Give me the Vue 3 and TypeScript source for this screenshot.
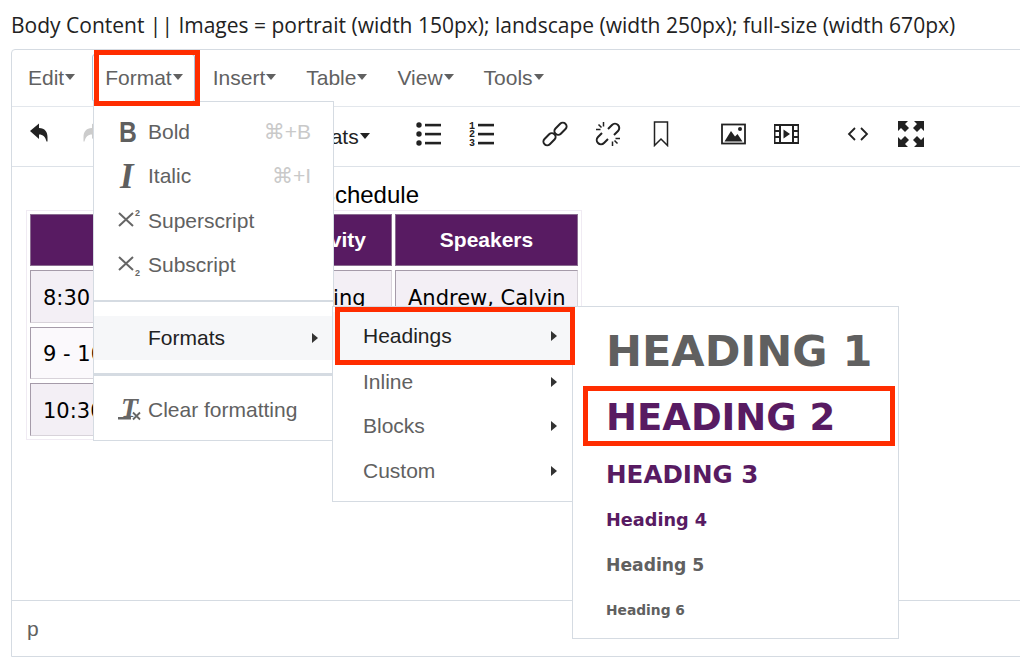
<script setup lang="ts">
const menus = ['Edit', 'Format', 'Insert', 'Table', 'View', 'Tools']

const formatItems = [
  { label: 'Bold', icon: 'bold', keys: '⌘+B' },
  { label: 'Italic', icon: 'italic', keys: '⌘+I' },
  { label: 'Superscript', icon: 'sup', keys: '' },
  { label: 'Subscript', icon: 'sub', keys: '' },
]

const formatsItems = ['Headings', 'Inline', 'Blocks', 'Custom']

const headings = [
  { label: 'HEADING 1', cls: 'h1' },
  { label: 'HEADING 2', cls: 'h2' },
  { label: 'HEADING 3', cls: 'h3' },
  { label: 'Heading 4', cls: 'h4' },
  { label: 'Heading 5', cls: 'h5' },
  { label: 'Heading 6', cls: 'h6' },
]

const rows = [
  { time: '8:30 - 9 am', activity: 'Opening', speakers: 'Andrew, Calvin' },
  { time: '9 - 10:30 am', activity: 'Keynote', speakers: 'Andrew' },
  { time: '10:30 - 11 am', activity: 'Break', speakers: 'Calvin' },
]
</script>

<template>
  <div class="page">
    <p class="label">Body Content || Images = portrait (width 150px); landscape (width 250px); full-size (width 670px)</p>

    <div class="editor">
      <div class="menubar">
        <button v-for="m in menus" :key="m" class="menu-btn" :class="{ active: m === 'Format' }">
          {{ m }}<i class="caret"></i>
        </button>
      </div>

      <div class="toolbar">
        <div class="group">
          <span class="tool">
            <svg width="20" height="24" viewBox="0 0 20 24"><path d="M1 9L10 1.500V6C16 6 18.500 10 18.500 15V19.500H17.500C16.500 15 14 12.500 10 12.500V17Z" fill="#222" /></svg>
          </span>
          <span class="tool">
            <svg width="20" height="24" viewBox="0 0 20 24"><path d="M19 9L10 1.500V6C4 6 1.500 10 1.500 15V19.500H2.500C3.500 15 6 12.500 10 12.500V17Z" fill="#ccc" /></svg>
          </span>
        </div>
        <div class="group formats-btn">Formats<i class="caret dark"></i></div>
        <div class="group">
          <span class="tool">
            <svg width="26" height="26" viewBox="0 0 26 26" fill="#222">
              <circle cx="3" cy="4" r="2.700" /><circle cx="3" cy="13" r="2.700" /><circle cx="3" cy="22" r="2.700" />
              <rect x="9" y="2.800" width="16" height="2.600" /><rect x="9" y="11.800" width="16" height="2.600" /><rect x="9" y="20.800" width="16" height="2.600" />
            </svg>
          </span>
          <span class="tool">
            <svg width="26" height="26" viewBox="0 0 26 26" fill="#222">
              <text x="0" y="7.500" class="num">1</text><text x="0" y="16" class="num">2</text><text x="0" y="24.500" class="num">3</text>
              <rect x="9" y="2.800" width="16" height="2.600" /><rect x="9" y="11.800" width="16" height="2.600" /><rect x="9" y="20.800" width="16" height="2.600" />
            </svg>
          </span>
        </div>
        <div class="group">
          <span class="tool">
            <svg width="26" height="26" viewBox="0 0 26 26" fill="none" stroke="#222" stroke-width="2">
              <rect x="11.500" y="4" width="14" height="7.500" rx="3.700" transform="rotate(-45 18.500 7.750)" />
              <rect x="0.500" y="14.500" width="14" height="7.500" rx="3.700" transform="rotate(-45 7.500 18.250)" />
            </svg>
          </span>
          <span class="tool">
            <svg width="28" height="28" viewBox="0 0 28 28" fill="none" stroke="#222" stroke-width="2">
              <path d="M14 9L18 5A4.200 4.200 0 0 1 24 11L20 15" />
              <path d="M14 19L10 23A4.200 4.200 0 0 1 4 17L8 13" />
              <path d="M9.500 2V6.500M2 9.500H6.500M4.500 4.500L7.500 7.500M18.500 26V21.500M26 18.500H21.500M23.500 23.500L20.500 20.500" stroke-width="1.500" />
            </svg>
          </span>
          <span class="tool">
            <svg width="16" height="26" viewBox="0 0 16 26" fill="none" stroke="#222" stroke-width="1.500"><path d="M1.500 1V24.500L8 18L14.500 24.500V1Z" /></svg>
          </span>
        </div>
        <div class="group">
          <span class="tool">
            <svg width="25" height="22" viewBox="0 0 25 22">
              <rect x="1" y="1.500" width="23" height="19" fill="none" stroke="#222" stroke-width="1.800" />
              <path d="M3.500 18.500L10 8L14 13.500L16.500 11L21.500 18.500Z" fill="#222" /><circle cx="19" cy="6" r="2" fill="#222" />
            </svg>
          </span>
          <span class="tool">
            <svg width="25" height="20" viewBox="0 0 25 20" fill="#222">
              <path fill-rule="evenodd" d="M0 0H25V20H0ZM1.500 2V6H5V2ZM1.500 8V12H5V8ZM1.500 14V18H5V14ZM20 2V6H23.500V2ZM20 8V12H23.500V8ZM20 14V18H23.500V14ZM7 2V18H18V2Z" />
              <path d="M9.500 5.500L16 10L9.500 14.500Z" />
            </svg>
          </span>
        </div>
        <div class="group">
          <span class="tool">
            <svg width="22" height="16" viewBox="0 0 22 16" fill="none" stroke="#222" stroke-width="1.800"><path d="M8 2L2 8L8 14M14 2L20 8L14 14" /></svg>
          </span>
          <span class="tool">
            <svg width="26" height="26" viewBox="0 0 26 26" fill="#222">
              <path d="M0 0H10L7 3L11 7L7 11L3 7L0 10ZM26 0V10L23 7L19 11L15 7L19 3L16 0ZM0 26V16L3 19L7 15L11 19L7 23L10 26ZM26 26H16L19 23L15 19L19 15L23 19L26 16Z" />
            </svg>
          </span>
        </div>
      </div>

      <div class="content">
        <p class="intro">Conference Schedule</p>
        <div class="table-wrap">
          <table>
            <thead>
              <tr><th class="c1">Time</th><th class="c2">Activity</th><th class="c3">Speakers</th></tr>
            </thead>
            <tbody>
              <tr v-for="(r, i) in rows" :key="r.time" :class="{ odd: i % 2 === 1 }">
                <td>{{ r.time }}</td><td>{{ r.activity }}</td><td>{{ r.speakers }}</td>
              </tr>
            </tbody>
          </table>
        </div>
      </div>

      <div class="statusbar">p</div>
    </div>

    <!-- open dropdowns -->
    <div class="dropdown format-menu">
      <div v-for="it in formatItems" :key="it.label" class="item">
        <span class="ico">
          <span v-if="it.icon === 'bold'" class="ico-b">B</span>
          <span v-else-if="it.icon === 'italic'" class="ico-i">I</span>
          <svg v-else-if="it.icon === 'sup'" width="24" height="24" viewBox="0 0 24 24">
            <path d="M1 4L15 17M15 4L1 17" stroke="#666" stroke-width="2" fill="none" />
            <text x="17" y="7" class="tiny">2</text>
          </svg>
          <svg v-else width="24" height="24" viewBox="0 0 24 24">
            <path d="M1 4L15 17M15 4L1 17" stroke="#666" stroke-width="2" fill="none" />
            <text x="17" y="23" class="tiny">2</text>
          </svg>
        </span>
        <span class="item-label">{{ it.label }}</span>
        <span class="keys">{{ it.keys }}</span>
      </div>
      <div class="sep sep-a"></div>
      <div class="item hover">
        <span class="ico"></span>
        <span class="item-label">Formats</span>
        <i class="arrow"></i>
      </div>
      <div class="sep sep-b"></div>
      <div class="item">
        <span class="ico">
          <svg class="clear-ico" width="26" height="26" viewBox="0 0 26 26">
            <text x="3" y="20" class="tx">T</text>
            <rect x="0" y="20" width="13" height="2.500" fill="#666" />
            <path d="M15 15.500L22 22.500M22 15.500L15 22.500" stroke="#666" stroke-width="1.800" fill="none" />
          </svg>
        </span>
        <span class="item-label">Clear formatting</span>
      </div>
    </div>

    <div class="dropdown formats-menu">
      <div v-for="(f, i) in formatsItems" :key="f" class="item" :class="{ hover: i === 0 }">
        <span class="item-label">{{ f }}</span>
        <i class="arrow"></i>
      </div>
    </div>

    <div class="dropdown headings-menu">
      <div v-for="h in headings" :key="h.cls" class="heading" :class="h.cls">{{ h.label }}</div>
    </div>

    <!-- red annotation boxes -->
    <div class="mark mark-format"></div>
    <div class="mark mark-headings"></div>
    <div class="mark mark-h2"></div>
  </div>
</template>

<style scoped>
.page {
  position: relative;
  width: 1020px;
  height: 663px;
  overflow: hidden;
  font-family: "Liberation Sans", Arial, sans-serif;
  color: #000;
  background: #fff;
}
.label {
  margin: 0;
  height: 49px;
  padding: 11px 0 0 11px;
  box-sizing: border-box;
  font-family: "Open Sans", sans-serif;
  font-size: 21px;
  line-height: 28px;
  color: #222;
  white-space: nowrap;
}
.editor {
  margin-left: 11px;
  width: 1040px;
  height: 608px;
  box-sizing: border-box;
  border: 1px solid #d5dbe2;
  border-radius: 4px 0 0 0;
  display: flex;
  flex-direction: column;
}
.menubar {
  height: 56px;
  flex: none;
  display: flex;
  align-items: center;
  gap: 30px;
  padding-left: 16px;
  border-bottom: 1px solid #e3e7ec;
}
.menu-btn {
  font: inherit;
  font-size: 21px;
  color: #616161;
  background: none;
  border: 0;
  padding: 0;
  display: flex;
  align-items: center;
}
.menu-btn.active {
  position: relative;
}
.menu-btn.active::before {
  content: "";
  position: absolute;
  inset: -12px -12px -12px -13px;
  border: 1px solid #a9c3dd;
  border-radius: 3px;
}
.caret {
  display: inline-block;
  margin-left: 1px;
  margin-top: -2px;
  border-top: 6px solid #616161;
  border-left: 5.500px solid transparent;
  border-right: 5.500px solid transparent;
}
.caret.dark {
  border-top-color: #222;
}
.toolbar {
  height: 59px;
  flex: none;
  display: flex;
  align-items: center;
  border-bottom: 1px solid #dde2e8;
}
.group {
  display: flex;
  align-items: center;
  margin-right: 19.300px;
}
.tool {
  width: 53px;
  height: 40px;
  margin-top: -6px;
  display: flex;
  align-items: center;
  justify-content: center;
}
.num {
  font: bold 10px "Liberation Mono", monospace;
}
.formats-btn {
  width: 246.400px;
  justify-content: flex-end;
  padding-right: 14px;
  box-sizing: border-box;
  font-size: 21px;
  color: #222;
}
.content {
  flex: 1;
  padding: 14px 0 0 14px;
}
.intro {
  margin: 0;
  width: 393px;
  height: 28px;
  text-align: right;
  font-size: 24px;
  line-height: 28px;
  color: #000;
  white-space: nowrap;
}
.table-wrap {
  margin-top: 1px;
  width: 556px;
  box-sizing: border-box;
  border: 1px solid #f0ebf3;
}
table {
  border-collapse: separate;
  border-spacing: 3px 4px;
  width: 100%;
  table-layout: fixed;
  margin: -1px 0;
}
th {
  height: 52px;
  padding: 0;
  background: #581b62;
  color: #fff;
  font-size: 21px;
  font-weight: bold;
  border: 1px solid #8a6c90;
  box-sizing: border-box;
}
.c1 {
  width: 231px;
}
.c2 {
  width: 128px;
}
td {
  height: 52.500px;
  box-sizing: border-box;
  padding: 3px 0 0 12px;
  background: #f3eff5;
  font-family: "DejaVu Sans", sans-serif;
  font-size: 21px;
  color: #000;
  white-space: nowrap;
  overflow: hidden;
  border: 1px solid #d8d3da;
  border-top-color: #a59ba9;
  border-left-color: #a59ba9;
}
tr.odd td {
  background: #fbf9fc;
}
.statusbar {
  height: 55px;
  flex: none;
  border-top: 1px solid #d5dbe2;
  border-bottom: 1px solid #d5dbe2;
  margin-bottom: -1px;
  padding-left: 15px;
  font-size: 21px;
  line-height: 56px;
  color: #616161;
}
.dropdown {
  position: absolute;
  box-sizing: border-box;
  background: #fff;
  border: 1px solid #d5dbe2;
  font-size: 21px;
  color: #616161;
}
.format-menu {
  left: 93px;
  top: 101px;
  width: 241px;
  height: 340px;
  padding: 8px 0;
}
.item {
  height: 44.250px;
  display: flex;
  align-items: center;
  position: relative;
}
.item.hover {
  background: #f6f7f9;
  color: #222;
}
.ico {
  width: 54px;
  flex: none;
  padding-left: 24px;
  box-sizing: border-box;
  display: flex;
  align-items: center;
  justify-content: flex-start;
}
.ico-b {
  font: bold 29px/1 "Liberation Sans", sans-serif;
  color: #5f5f5f;
  margin-left: 1px;
  transform: scaleX(0.85);
  transform-origin: left center;
}
.ico-i {
  font: italic bold 35px/1 "Liberation Serif", serif;
  color: #5f5f5f;
  margin-left: 2px;
}
.clear-ico {
  overflow: visible;
}
.tiny {
  font: bold 9px "Liberation Sans", sans-serif;
  fill: #666;
}
.tx {
  font: italic bold 28px "Liberation Serif", serif;
  fill: #666;
}
.keys {
  position: absolute;
  right: 22px;
  color: #c9c9c9;
  font-family: "Liberation Sans", "DejaVu Sans", sans-serif;
  font-size: 21px;
}
.arrow {
  position: absolute;
  right: 15px;
  border-left: 6px solid #333;
  border-top: 5.500px solid transparent;
  border-bottom: 5.500px solid transparent;
}
.sep {
  background: #d5dbe2;
}
.sep-a {
  height: 2px;
  margin: 13px 0 14px;
}
.sep-b {
  height: 3px;
  margin: 13px 0 12px;
}
.formats-menu {
  left: 332px;
  top: 306px;
  width: 241px;
  height: 196px;
  padding: 5px 0 0;
}
.formats-menu .item {
  padding-left: 30px;
}
.formats-menu .item:first-child {
  height: 48px;
}
.headings-menu {
  left: 572px;
  top: 306px;
  width: 327px;
  height: 333px;
  padding: 16px 0 0 33px;
  font-family: "DejaVu Sans", sans-serif;
  font-weight: bold;
  color: #606060;
}
.heading {
  display: flex;
  align-items: center;
  white-space: nowrap;
}
.h1 {
  height: 56px;
  font-size: 43px;
}
.h2 {
  height: 76px;
  font-size: 37px;
  color: #581b62;
}
.h3 {
  height: 38px;
  font-size: 24.600px;
  color: #581b62;
}
.h4 {
  height: 54px;
  font-size: 17.700px;
  color: #581b62;
}
.h5 {
  height: 36px;
  font-size: 17.200px;
}
.h6 {
  height: 54px;
  font-size: 13.800px;
}
.mark {
  position: absolute;
  box-sizing: border-box;
  border: 5px solid #ff2d00;
}
.mark-format {
  left: 94px;
  top: 50px;
  width: 106px;
  height: 56px;
}
.mark-headings {
  left: 335px;
  top: 307px;
  width: 240px;
  height: 58px;
}
.mark-h2 {
  left: 583px;
  top: 386px;
  width: 312px;
  height: 60px;
}
</style>

<style>
html,
body {
  margin: 0;
  overflow: hidden;
}
</style>
